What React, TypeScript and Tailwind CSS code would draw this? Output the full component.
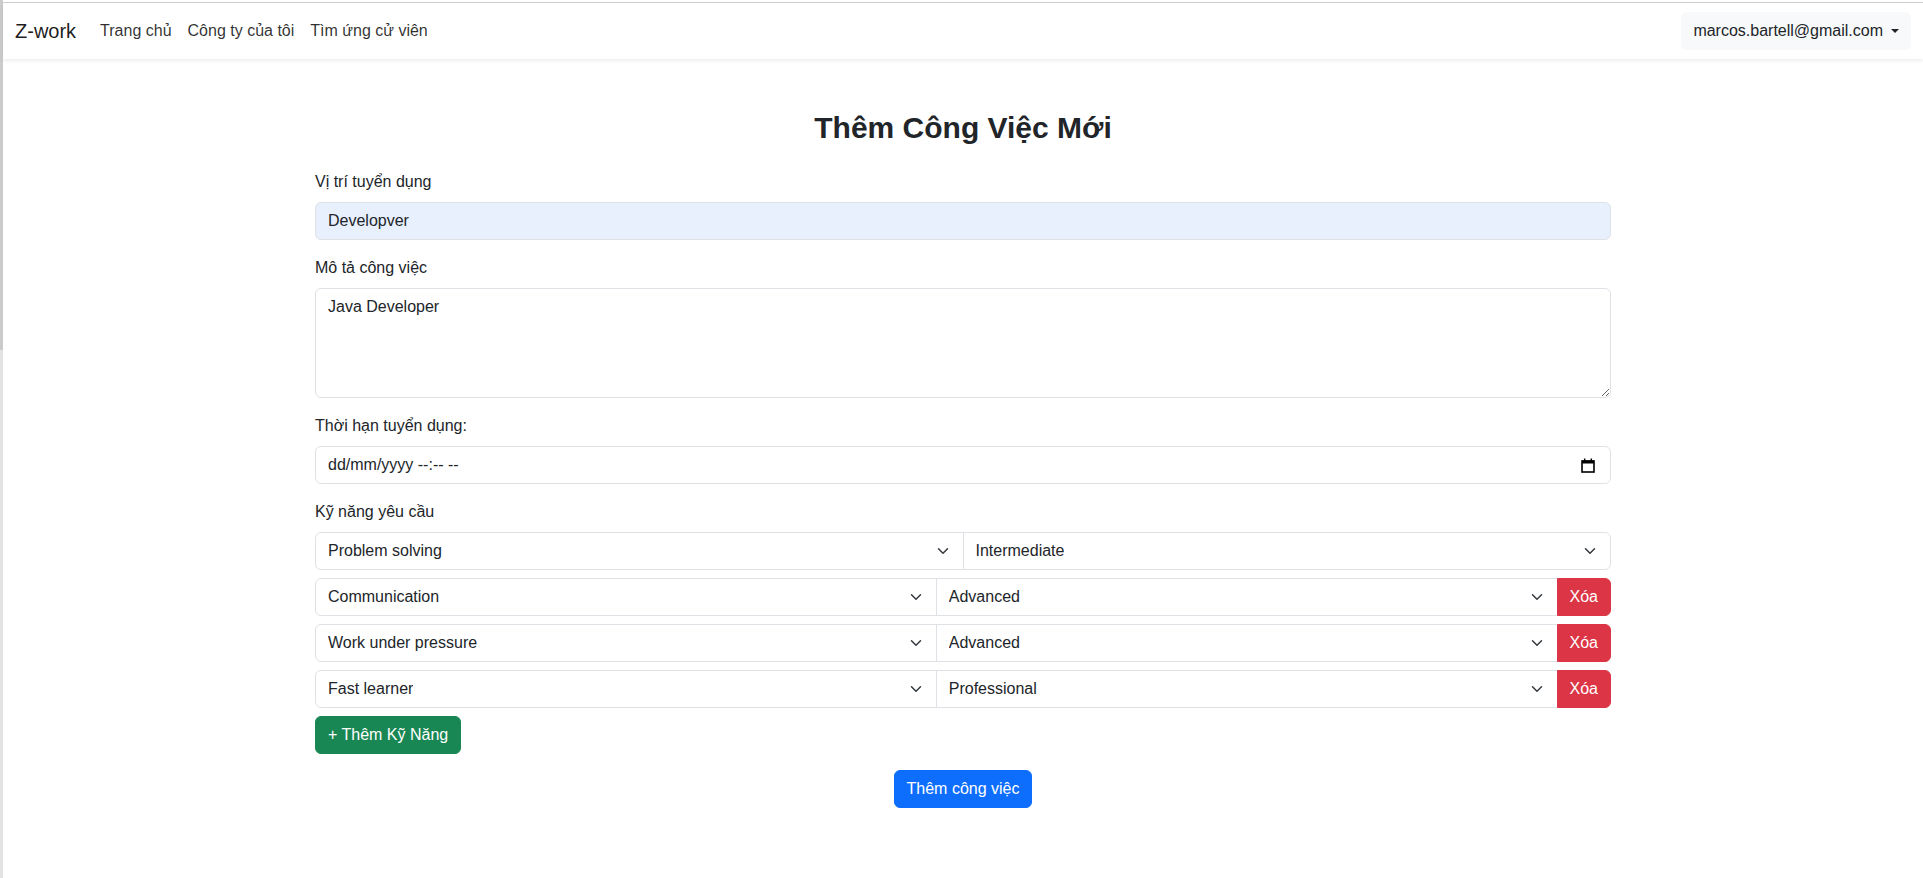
import React from "react";

function Chevron() {
  return (
    <svg width="16" height="12" viewBox="0 0 16 16" preserveAspectRatio="xMidYMid meet" className="mr-[12px] shrink-0">
      <path d="m2 5 6 6 6-6" fill="none" stroke="#343a40" strokeWidth="2" strokeLinecap="round" strokeLinejoin="round" />
    </svg>
  );
}

function Sel({ label, cls }: { label: string; cls: string }) {
  return (
    <div className={`flex h-[38px] min-w-0 basis-0 grow items-center justify-between border border-[#dee2e6] bg-white pl-[12px] text-[16px] text-[#212529] ${cls}`}>
      <span className="truncate">{label}</span>
      <Chevron />
    </div>
  );
}

function CalendarIcon() {
  return (
    <svg width="14" height="15" viewBox="0 0 14 15" className="shrink-0">
      <rect x="1" y="3" width="12" height="11" fill="none" stroke="#000" strokeWidth="1.6" />
      <rect x="1" y="2.5" width="12" height="3" fill="#000" />
      <rect x="3" y="0.5" width="1.4" height="2.5" fill="#000" />
      <rect x="9.6" y="0.5" width="1.4" height="2.5" fill="#000" />
    </svg>
  );
}

export default function App() {
  const rows = [
    ["Communication", "Advanced"],
    ["Work under pressure", "Advanced"],
    ["Fast learner", "Professional"],
  ];
  return (
    <div className="flex min-h-[878px] w-full bg-white font-['Liberation_Sans',Arial,sans-serif] text-[#212529]">
      <div className="flex w-[3px] shrink-0 flex-col">
        <div className="h-[350px] bg-[#cbcbcb]"></div>
        <div className="grow bg-[#e3e3e3]"></div>
      </div>
      <div className="flex min-w-0 grow flex-col">
        <div className="h-[2px] bg-white"></div>
        <div className="h-px bg-[#cfcfcf]"></div>
        <nav className="relative z-10 flex h-[56px] items-center justify-between bg-white px-[12px] shadow-[0_2px_4px_rgba(0,0,0,0.075)]">
          <div className="flex items-center">
            <span className="mr-[16px] text-[20px] leading-[30px] text-[rgba(0,0,0,0.9)]">Z-work</span>
            <div className="flex items-center text-[16px] text-[rgba(0,0,0,0.82)]">
              <span className="px-[8px] py-[8px]">Trang chủ</span>
              <span className="px-[8px] py-[8px]">Công ty của tôi</span>
              <span className="px-[8px] py-[8px]">Tìm ứng cử viên</span>
            </div>
          </div>
          <div className="flex h-[38px] items-center rounded-[6px] bg-[#f8f9fa] px-[12px] text-[16px] text-[#212529]">
            <span>marcos.bartell@gmail.com</span>
            <span className="ml-[8px] h-0 w-0 border-x-[4.8px] border-t-[4.8px] border-x-transparent border-t-[#212529]"></span>
          </div>
        </nav>

        <main className="mx-auto w-[1296px] pt-[50px]">
          <h2 className="mb-[23px] h-[38px] text-center text-[30px] font-bold leading-[38px] text-[#212529]">
            Thêm Công Việc Mới
          </h2>

          <div className="mb-[16px]">
            <div className="mb-[8px] text-[16px] leading-[24px]">Vị trí tuyển dụng</div>
            <div className="flex h-[38px] items-center rounded-[6px] border border-[#dee2e6] bg-[#e8f0fe] px-[12px] text-[16px]">
              Developver
            </div>
          </div>

          <div className="mb-[16px]">
            <div className="mb-[8px] text-[16px] leading-[24px]">Mô tả công việc</div>
            <textarea
              readOnly
              defaultValue="Java Developer"
              className="block h-[110px] w-full rounded-[6px] border border-[#dee2e6] bg-white px-[12px] py-[6px] text-[16px] leading-[24px] text-[#212529] outline-none"
            />
          </div>

          <div className="mb-[16px]">
            <div className="mb-[8px] text-[16px] leading-[24px]">Thời hạn tuyển dụng:</div>
            <div className="flex h-[38px] items-center justify-between rounded-[6px] border border-[#dee2e6] bg-white pl-[12px] pr-[15px] text-[16px]">
              <span>dd/mm/yyyy --:-- --</span>
              <CalendarIcon />
            </div>
          </div>

          <div className="mb-[8px] text-[16px] leading-[24px]">Kỹ năng yêu cầu</div>

          <div className="mb-[8px] flex">
            <Sel label="Problem solving" cls="rounded-l-[6px]" />
            <Sel label="Intermediate" cls="-ml-px rounded-r-[6px]" />
          </div>

          {rows.map(([a, b]) => (
            <div key={a} className="mb-[8px] flex">
              <Sel label={a} cls="rounded-l-[6px]" />
              <Sel label={b} cls="-ml-px" />
              <button className="-ml-px h-[38px] shrink-0 rounded-r-[6px] border border-[#dc3545] bg-[#dc3545] px-[12px] text-[16px] text-white">
                Xóa
              </button>
            </div>
          ))}

          <button className="h-[38px] rounded-[6px] border border-[#198754] bg-[#198754] px-[12px] text-[16px] text-white">
            + Thêm Kỹ Năng
          </button>

          <div className="mt-[16px] flex justify-center">
            <button className="h-[38px] rounded-[6px] border border-[#0d6efd] bg-[#0d6efd] px-[12px] text-[16px] text-white">
              Thêm công việc
            </button>
          </div>
        </main>
      </div>
    </div>
  );
}
